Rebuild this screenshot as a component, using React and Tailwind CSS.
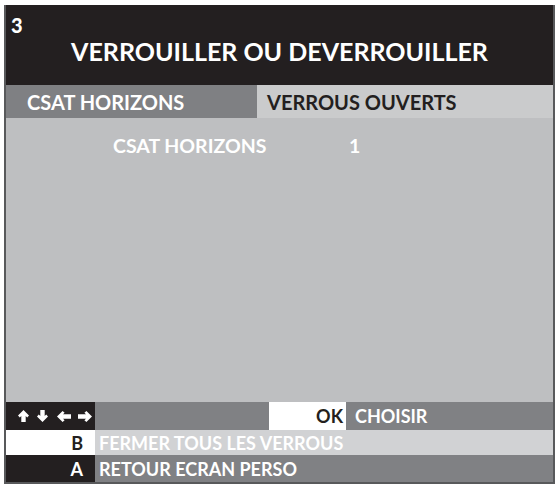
const VArrow = ({ down }) => (
  <svg width="11" height="12" viewBox="0 0 11 12" className={down ? "rotate-180" : ""}>
    <path
      fill="white"
      d="M5.5 0L11 5.4L9.2 7.4L7.7 5.9V12H3.3V5.9L1.8 7.4L0 5.4Z"
    />
  </svg>
);

const HArrow = ({ right }) => (
  <svg width="14" height="11" viewBox="0 0 14 11" className={right ? "rotate-180" : ""}>
    <path
      fill="white"
      d="M0 5.5L5.6 0L7.6 1.8L6 3.3H14V7.7H6L7.6 9.2L5.6 11Z"
    />
  </svg>
);

export default function App() {
  return (
    <div className="w-[557px] h-[487px] bg-white pt-[5px] pl-[4px] font-[Lato,sans-serif] font-bold">
      <div className="w-[551px] flex flex-col border-l-2 border-r-2 border-b-2 border-[#58595b]">
        {/* header */}
        <div className="h-[80px] bg-[#231f20] text-white flex flex-col">
          <div className="pl-[5px] pt-[10px] text-[20px] leading-none font-black">3</div>
          <div className="mt-[4px] text-center text-[25px] leading-none">
            VERROUILLER OU DEVERROUILLER
          </div>
        </div>

        {/* tabs */}
        <div className="h-[33px] flex text-[20px] leading-none">
          <div className="w-[251px] bg-[#7f8083] text-white pl-[21px] flex items-center">
            CSAT HORIZONS
          </div>
          <div className="flex-1 bg-[#cacbcc] text-[#231f20] pl-[10px] flex items-center">
            VERROUS OUVERTS
          </div>
        </div>

        {/* list */}
        <div className="h-[284px] bg-[#bebfc1] pt-[18px] text-white text-[19.5px] leading-none">
          <div className="flex pl-[107px]">
            <div className="w-[236px]">CSAT HORIZONS</div>
            <div>1</div>
          </div>
        </div>

        {/* help rows */}
        <div className="h-[28px] flex text-[18px] leading-none">
          <div className="w-[89px] bg-[#231f20] flex items-center pl-[12px]">
            <VArrow />
            <div className="ml-[8px]">
              <VArrow down />
            </div>
            <div className="ml-[9px]">
              <HArrow />
            </div>
            <div className="ml-[7px]">
              <HArrow right />
            </div>
          </div>
          <div className="flex-1 bg-[#808184] flex">
            <div className="w-[174px]" />
            <div className="w-[77px] bg-white text-[#231f20] flex items-center justify-end pr-[3px]">
              OK
            </div>
            <div className="flex items-center pl-[9px] text-white">CHOISIR</div>
          </div>
        </div>
        <div className="h-[25px] flex text-[18px] leading-none">
          <div className="w-[89px] bg-white text-[#231f20] flex items-center justify-end pr-[12px]">
            B
          </div>
          <div className="flex-1 bg-[#d1d2d4] text-white flex items-center pl-[4px]">
            FERMER TOUS LES VERROUS
          </div>
        </div>
        <div className="h-[27px] flex text-[18px] leading-none">
          <div className="w-[89px] bg-[#231f20] text-white flex items-center justify-end pr-[12px]">
            A
          </div>
          <div className="flex-1 bg-[#808184] text-white flex items-center pl-[4px]">
            RETOUR ECRAN PERSO
          </div>
        </div>
      </div>
    </div>
  );
}
